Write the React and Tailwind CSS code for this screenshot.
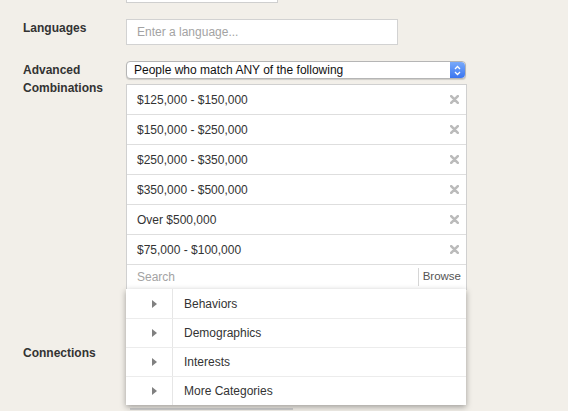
import { useState } from "react";

const incomes = [
  "$125,000 - $150,000",
  "$150,000 - $250,000",
  "$250,000 - $350,000",
  "$350,000 - $500,000",
  "Over $500,000",
  "$75,000 - $100,000",
];

const categories = ["Behaviors", "Demographics", "Interests", "More Categories"];

function RemoveIcon() {
  return (
    <svg width="9" height="9" viewBox="0 0 9 9" className="shrink-0">
      <path d="M1.2 1.2 L7.8 7.8 M7.8 1.2 L1.2 7.8" stroke="#bbbbbb" strokeWidth="2.6" strokeLinecap="round" />
    </svg>
  );
}

function Stepper() {
  return (
    <div className="flex h-full w-[15px] items-center justify-center rounded-r-[4px] bg-gradient-to-b from-[#79a9fa] to-[#3b75f0]">
      <svg width="7" height="11" viewBox="0 0 7 11">
        <path d="M1 4 L3.5 1.5 L6 4 M1 7 L3.5 9.5 L6 7" stroke="#fff" strokeWidth="1.3" fill="none" />
      </svg>
    </div>
  );
}

function Label({ children }) {
  return <div className="w-[126px] shrink-0 pl-[23px] text-[12px] font-bold leading-[18px] text-[#333]">{children}</div>;
}

export default function App() {
  const [items, setItems] = useState(incomes);

  return (
    <div className="h-[411px] w-[568px] overflow-hidden bg-[#f2efe9] font-['Liberation_Sans',Arial,sans-serif]">
      <div className="ml-[126px] h-[3px] w-[152px] border-x border-b border-[#cfcfcf] bg-white" />

      <div className="mt-[16px] flex">
        <Label>Languages</Label>
        <div className="flex h-[26px] w-[272px] items-center border border-[#d2d2d2] bg-white pl-[10px] text-[12px] text-[#a3a3a3]">
          Enter a language...
        </div>
      </div>

      <div className="mt-[16px] flex">
        <Label>
          Advanced
          <br />
          Combinations
        </Label>
        <div className="relative w-[341px]">
          <div className="flex h-[18px] w-[340px] items-center rounded-[4px] border border-[#b5b5b5] bg-white shadow-[0_1px_1px_rgba(0,0,0,0.15)]">
            <span className="flex-1 pl-[7px] text-[12px] leading-none text-[#111]">People who match ANY of the following</span>
            <Stepper />
          </div>

          <div className="mt-[5px] border border-[#d0d0d0] bg-white">
            {items.map((label) => (
              <div key={label} className="flex h-[30px] items-center justify-between border-b border-[#dedede] pl-[10px] pr-[7px] text-[12px] text-[#333]">
                <span>{label}</span>
                <button type="button" onClick={() => setItems(items.filter((i) => i !== label))}>
                  <RemoveIcon />
                </button>
              </div>
            ))}
            <div className="flex h-[24px] items-center">
              <span className="flex-1 pl-[10px] text-[12px] text-[#a3a3a3]">Search</span>
              <div className="h-[18px] border-l border-[#d6d6d6]" />
              <span className="pl-[4px] pr-[5px] text-[11.5px] text-[#555]">Browse</span>
            </div>
          </div>

          <div className="absolute left-0 top-[calc(100%-1px)] z-10 w-[340px] bg-white shadow-[0_2px_6px_rgba(0,0,0,0.35)]">
            {categories.map((c, idx) => (
              <div key={c} className={`flex h-[29px] ${idx > 0 ? "border-t border-[#ececec]" : ""}`}>
                <div className="flex w-[47px] items-center justify-center border-r border-[#e6e6e6] pl-[11px]">
                  <svg width="5" height="8" viewBox="0 0 5 8">
                    <path d="M0 0 L5 4 L0 8 Z" fill="#808080" />
                  </svg>
                </div>
                <div className="flex items-center pl-[11px] text-[12px] text-[#333]">{c}</div>
              </div>
            ))}
          </div>
        </div>
      </div>

      <div className="mt-[54px] flex">
        <Label>Connections</Label>
        <div className="pt-[64px]">
          <div className="ml-[4px] h-[6px] w-[163px] border-t-2 border-[#cfcfcf]" />
        </div>
      </div>
    </div>
  );
}
